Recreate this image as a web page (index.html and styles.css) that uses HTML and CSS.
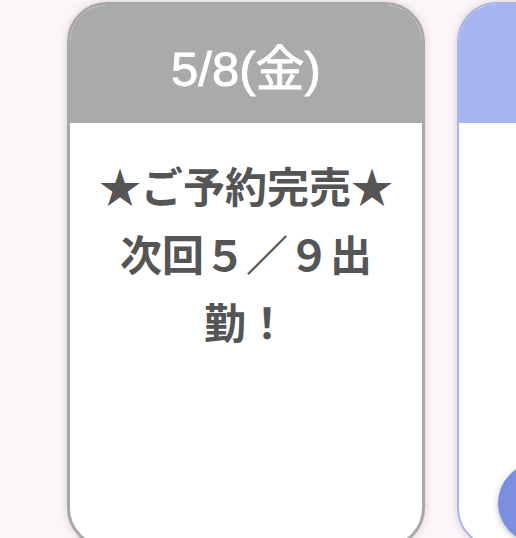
FILE: index.html
```html
<!DOCTYPE html>
<html lang="ja">
<head>
<meta charset="utf-8">
<link rel="stylesheet" href="styles.css">
</head>
<body>
<div class="row">
  <div class="card card-grey">
    <div class="card-head">5/8(金)</div>
    <div class="card-body">★ご予約完売★次回５／９出勤！</div>
  </div>
  <div class="card card-blue">
    <div class="card-head"></div>
    <div class="card-body"></div>
    <div class="fab"></div>
  </div>
</div>
</body>
</html>
```
FILE: styles.css
```css
html, body {
  margin: 0;
  padding: 0;
  background: #fcf5f9;
  overflow: hidden;
}
.row {
  display: flex;
  gap: 32px;
  padding: 2px 0 0 67px;
  height: 538px;
  overflow: hidden;
  box-sizing: border-box;
}
.card {
  position: relative;
  flex: 0 0 358px;
  height: 546px;
  box-sizing: border-box;
  border: 3px solid #a8a8a8;
  border-radius: 40px;
  overflow: hidden;
  background: #ffffff;
  box-shadow: 0 0 8px rgba(60, 40, 60, 0.18);
  display: flex;
  flex-direction: column;
}
.card-blue {
  border: 2px solid #a9b4e8;
}
.card-head {
  height: 118px;
  background: #aaaaaa;
  color: #ffffff;
  font-family: "Liberation Sans", "Noto Sans CJK JP", sans-serif;
  font-weight: 400;
  font-size: 49px;
  -webkit-text-stroke: 0.9px #ffffff;
  display: flex;
  align-items: center;
  justify-content: center;
}
.card-blue .card-head {
  height: 119px;
  background: #a6b4f0;
}
.card-body {
  flex: 1;
  padding: 28px 20px 0;
  text-align: center;
  font-family: "Noto Sans CJK JP", sans-serif;
  font-weight: 700;
  font-size: 42px;
  line-height: 68px;
  color: #555555;
}
.fab {
  position: absolute;
  left: 39px;
  top: 459px;
  width: 80px;
  height: 80px;
  border-radius: 50%;
  background: #7b8ee0;
  box-shadow: 0 2px 6px rgba(0, 0, 0, 0.25);
}
```
